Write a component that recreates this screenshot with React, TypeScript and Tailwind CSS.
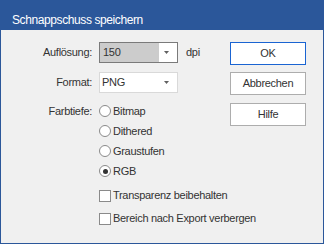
function Arrow() {
  return (
    <svg width="5" height="3" viewBox="0 0 5 3" className="block">
      <polygon points="0,0 5,0 2.5,3" fill="#606060" />
    </svg>
  );
}

function Radio({ label, checked = false }: { label: string; checked?: boolean }) {
  return (
    <div className="h-[20px] flex items-center gap-[2px]">
      <span className="w-[12px] h-[12px] rounded-full border border-[#8a8a8a] bg-white flex items-center justify-center">
        {checked && <span className="w-[5px] h-[5px] rounded-full bg-[#333]" />}
      </span>
      <span>{label}</span>
    </div>
  );
}

function Check({ label }: { label: string }) {
  return (
    <div className="h-[23px] flex items-center gap-[2px] whitespace-nowrap">
      <span className="w-[12px] h-[12px] shrink-0 border border-[#8a8a8a] bg-white" />
      <span>{label}</span>
    </div>
  );
}

export default function App() {
  return (
    <div className="w-[324px] h-[244px] flex flex-col bg-[#f0f0f0] text-[#333] font-['Liberation_Sans',Arial,sans-serif]">
      <div className="h-[30px] shrink-0 bg-[#2b579a] text-white text-[12px] leading-[14px] pt-[13px] pl-[12px] tracking-[-0.4px]">
        Schnappschuss speichern
      </div>
      <div className="flex-1 flex border-x border-b border-[#2b579a] pt-[12px] text-[11px] tracking-[-0.3px]">
        <div className="flex-1 min-w-0 grid grid-cols-[91px_minmax(0,1fr)] gap-x-[7px] content-start">
          {/* Auflösung */}
          <div className="h-[21px] flex items-center justify-end">Auflösung:</div>
          <div className="flex items-center">
            <div className="w-[79px] h-[21px] border border-[#7a7a7a] bg-white flex">
              <div className="w-[59px] bg-[#cccccc] pl-[3px] flex items-center">150</div>
              <div className="flex-1 flex items-center justify-end pr-[8px]">
                <Arrow />
              </div>
            </div>
            <span className="ml-[8px]">dpi</span>
          </div>

          {/* Format */}
          <div className="mt-[9px] h-[21px] flex items-center justify-end">Format:</div>
          <div className="mt-[9px]">
            <div className="w-[79px] h-[21px] border border-[#d9d9d9] bg-white flex items-center pl-[2px]">
              <span className="flex-1">PNG</span>
              <span className="pr-[8px]">
                <Arrow />
              </span>
            </div>
          </div>

          {/* Farbtiefe */}
          <div className="mt-[8px] h-[20px] flex items-center justify-end">Farbtiefe:</div>
          <div className="mt-[8px] flex flex-col">
            <Radio label="Bitmap" />
            <Radio label="Dithered" />
            <Radio label="Graustufen" />
            <Radio label="RGB" checked />
          </div>

          <div className="col-start-2 mt-[3px] flex flex-col">
            <Check label="Transparenz beibehalten" />
            <Check label="Bereich nach Export verbergen" />
          </div>
        </div>

        <div className="w-[76px] mr-[17px] shrink-0 flex flex-col">
          <button className="h-[23px] border border-[#1a64d2] bg-white flex items-center justify-center">OK</button>
          <button className="mt-[7px] h-[23px] border border-[#adadad] bg-white flex items-center justify-center">
            Abbrechen
          </button>
          <button className="mt-[8px] h-[23px] border border-[#adadad] bg-white flex items-center justify-center">
            Hilfe
          </button>
        </div>
      </div>
    </div>
  );
}
